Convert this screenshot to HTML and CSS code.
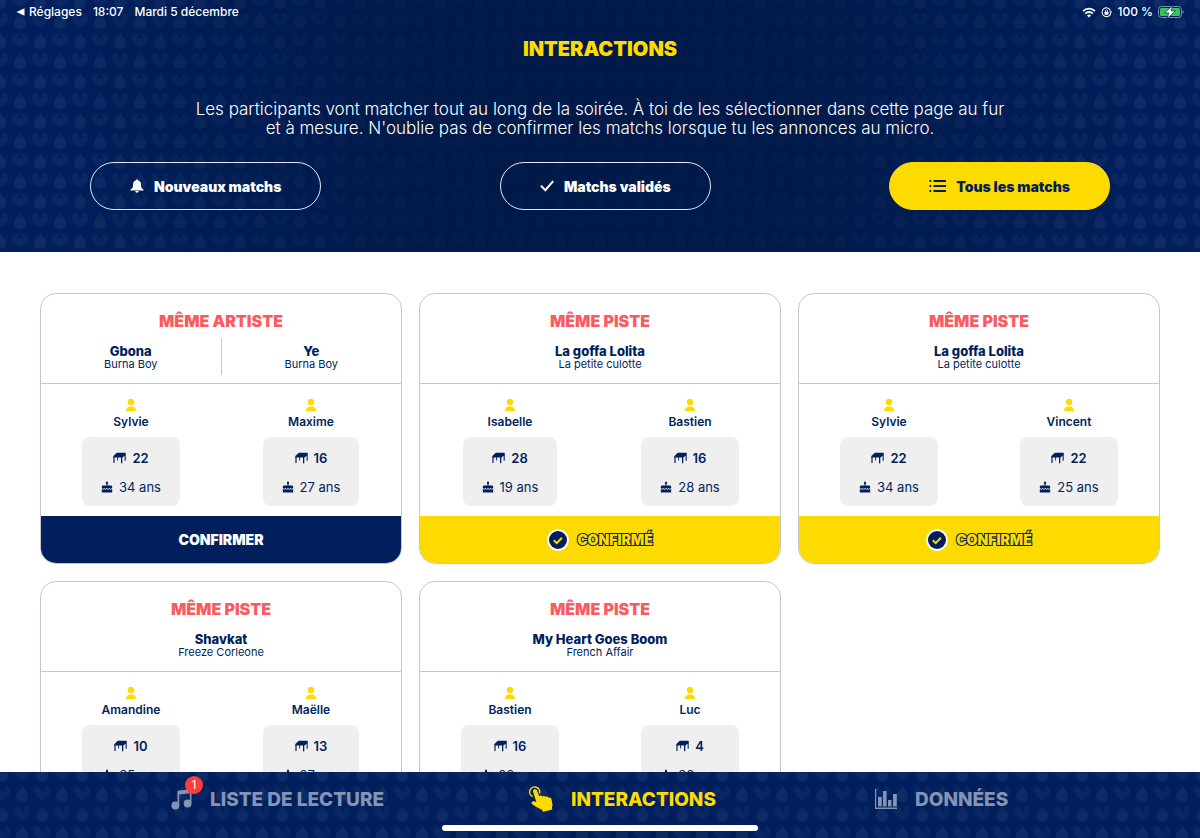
FILE: index.html
```html
<!DOCTYPE html>
<html lang="fr">
<head>
<meta charset="utf-8">
<meta name="viewport" content="width=device-width, initial-scale=1">
<title>Interactions</title>
<link rel="stylesheet" href="styles.css">
</head>
<body>
<svg class="sprite" aria-hidden="true">
  <symbol id="person" viewBox="0 0 12 14"><circle cx="6" cy="4" r="3.2"/><path d="M.8 13.200C.8 10 3 8.400 6 8.400s5.200 1.600 5.200 4.800z"/></symbol>
  <symbol id="desk" viewBox="0 0 13 12"><path d="M3.800.8H12.700V3L9.300 5.600H.4V4z"/><path d="M.4 4.500h1.200V11H.4zM4.200 5h.9v3.500h-.9zM8 5h1.300v6.200H8zM11.600 2.500h1.100v6.300h-1.100z"/></symbol>
  <symbol id="cake" viewBox="0 0 12 12"><path d="M6 0l1.200 1.900a1.200 1.200 0 0 1-.7 1.300V4.500H9.800c.8 0 1.400.6 1.400 1.400v1.200l-1.300.8-1.300-.9-1.300.9L6 7l-1.300.9L3.400 7l-1.300.9L.8 7.100V5.900c0-.8.600-1.400 1.400-1.400h3.300V3.200a1.200 1.200 0 0 1-.7-1.300z"/><path d="M.8 8l1.300.8 1.300-.9 1.300.9L6 7.900l1.300.9 1.300-.9 1.300.9 1.300-.8v3.500H.8z"/></symbol>
  <symbol id="done" viewBox="0 0 22 22"><circle cx="11" cy="11" r="10.800" fill="#fff"/><circle cx="11" cy="11" r="9" fill="#001f5c"/><path d="M6.800 11.300l2.900 2.800 5.200-5.400" fill="none" stroke="#fddb00" stroke-width="2"/></symbol>
</svg>
<div class="app">
  <header class="hero">
    <div class="status">
      <div class="status-left"><a class="back" href="#"><svg class="caret" viewBox="0 0 9 8" aria-hidden="true"><path d="M.5 4L8.500.300v7.400z" fill="#fff"/></svg>Réglages</a><span>18:07</span><span>Mardi 5 décembre</span></div>
      <div class="status-right">
        <svg class="wifi" viewBox="0 0 16 12" aria-hidden="true"><g fill="none" stroke="#fff" stroke-width="2.200"><path d="M1.200 4.400a9.600 9.600 0 0 1 13.600 0"/><path d="M3.700 7.300a6 6 0 0 1 8.600 0"/></g><path d="M5.700 9.400a3.200 3.200 0 0 1 4.600 0L8 11.800z" fill="#fff"/></svg>
        <svg class="lock" viewBox="0 0 12 12" aria-hidden="true"><path d="M10.400 3.800A4.800 4.800 0 1 0 10.800 6" fill="none" stroke="#fff" stroke-width="1.100"/><path d="M8.800 4.500h3L11 6.700z" fill="#fff"/><rect x="3.900" y="5.300" width="4.200" height="3.200" rx=".5" fill="#fff"/><path d="M4.800 5.500V4.300a1.200 1.200 0 0 1 2.400 0v1.200" fill="none" stroke="#fff" stroke-width=".8"/></svg>
        <span>100 %</span>
        <svg class="battery" viewBox="0 0 26 14" aria-hidden="true"><rect x=".5" y="1.500" width="23" height="11" rx="3" fill="none" stroke="#7f8fae" stroke-width="1"/><rect x="2" y="3" width="20" height="8" rx="1.500" fill="#34c759"/><path d="M24.600 5.200c1.600.6 1.600 3 0 3.600z" fill="#7f8fae"/><path d="M14.600.500L6.500 7.900h4.300L9.200 13.500l8.300-7.600h-4.400z" fill="#fff" stroke="#001c50" stroke-width=".7"/></svg>
      </div>
    </div>
    <h1 class="title">INTERACTIONS</h1>
    <p class="intro">Les participants vont matcher tout au long de la soirée. À toi de les sélectionner dans cette page au fur<br>et à mesure. N'oublie pas de confirmer les matchs lorsque tu les annonces au micro.</p>
    <div class="filters">
      <button class="filter filter-new" type="button"><svg class="bell" viewBox="0 0 14 14" aria-hidden="true"><path d="M7 .5c.7 0 1.200.5 1.200 1.100C10.100 2.200 11 3.700 11 5.500c0 3 .6 4 2.500 5v.9H.5v-.9C2.400 9.500 3 8.500 3 5.500c0-1.800.9-3.300 2.800-3.900C5.800 1 6.300.5 7 .5zM5.300 12h3.400a1.700 1.700 0 0 1-3.400 0z" fill="currentColor"/></svg>Nouveaux matchs</button>
      <button class="filter filter-ok" type="button"><svg class="tick" viewBox="0 0 14 12" aria-hidden="true"><path d="M.9 5.600l4.400 4.600L13.200 1.200" fill="none" stroke="currentColor" stroke-width="2"/></svg>Matchs validés</button>
      <button class="filter filter-all" type="button"><svg class="list" viewBox="0 0 17 14" aria-hidden="true"><path d="M4.500 2H17M4.500 7H17M4.500 12H17M.5 2h1.700M.5 7h1.700M.5 12h1.700" fill="none" stroke="currentColor" stroke-width="2"/></svg>Tous les matchs</button>
    </div>
  </header>

  <main class="content">
    <article class="card">
      <div class="card-head">
        <h2 class="kind">MÊME ARTISTE</h2>
        <div class="songs"><div class="song"><strong>Gbona</strong><span>Burna Boy</span></div><div class="song song-next"><strong>Ye</strong><span>Burna Boy</span></div></div>
      </div>
      <div class="people">
        <div class="person"><svg class="avatar"><use href="#person"/></svg><span class="name">Sylvie</span><div class="facts"><div class="table-no"><svg class="desk"><use href="#desk"/></svg>22</div><div class="age"><svg class="cake"><use href="#cake"/></svg>34 ans</div></div></div>
        <div class="person"><svg class="avatar"><use href="#person"/></svg><span class="name">Maxime</span><div class="facts"><div class="table-no"><svg class="desk"><use href="#desk"/></svg>16</div><div class="age"><svg class="cake"><use href="#cake"/></svg>27 ans</div></div></div>
      </div>
      <button class="action" type="button">CONFIRMER</button>
    </article>

    <article class="card">
      <div class="card-head">
        <h2 class="kind">MÊME PISTE</h2>
        <div class="songs"><div class="song"><strong>La goffa Lolita</strong><span>La petite culotte</span></div></div>
      </div>
      <div class="people">
        <div class="person"><svg class="avatar"><use href="#person"/></svg><span class="name">Isabelle</span><div class="facts"><div class="table-no"><svg class="desk"><use href="#desk"/></svg>28</div><div class="age"><svg class="cake"><use href="#cake"/></svg>19 ans</div></div></div>
        <div class="person"><svg class="avatar"><use href="#person"/></svg><span class="name">Bastien</span><div class="facts"><div class="table-no"><svg class="desk"><use href="#desk"/></svg>16</div><div class="age"><svg class="cake"><use href="#cake"/></svg>28 ans</div></div></div>
      </div>
      <button class="action confirmed" type="button"><svg class="done"><use href="#done"/></svg><span class="outlined">CONFIRMÉ</span></button>
    </article>

    <article class="card">
      <div class="card-head">
        <h2 class="kind">MÊME PISTE</h2>
        <div class="songs"><div class="song"><strong>La goffa Lolita</strong><span>La petite culotte</span></div></div>
      </div>
      <div class="people">
        <div class="person"><svg class="avatar"><use href="#person"/></svg><span class="name">Sylvie</span><div class="facts"><div class="table-no"><svg class="desk"><use href="#desk"/></svg>22</div><div class="age"><svg class="cake"><use href="#cake"/></svg>34 ans</div></div></div>
        <div class="person"><svg class="avatar"><use href="#person"/></svg><span class="name">Vincent</span><div class="facts"><div class="table-no"><svg class="desk"><use href="#desk"/></svg>22</div><div class="age"><svg class="cake"><use href="#cake"/></svg>25 ans</div></div></div>
      </div>
      <button class="action confirmed" type="button"><svg class="done"><use href="#done"/></svg><span class="outlined">CONFIRMÉ</span></button>
    </article>

    <article class="card">
      <div class="card-head">
        <h2 class="kind">MÊME PISTE</h2>
        <div class="songs"><div class="song"><strong>Shavkat</strong><span>Freeze Corleone</span></div></div>
      </div>
      <div class="people">
        <div class="person"><svg class="avatar"><use href="#person"/></svg><span class="name">Amandine</span><div class="facts"><div class="table-no"><svg class="desk"><use href="#desk"/></svg>10</div><div class="age"><svg class="cake"><use href="#cake"/></svg>35 ans</div></div></div>
        <div class="person"><svg class="avatar"><use href="#person"/></svg><span class="name">Maëlle</span><div class="facts"><div class="table-no"><svg class="desk"><use href="#desk"/></svg>13</div><div class="age"><svg class="cake"><use href="#cake"/></svg>27 ans</div></div></div>
      </div>
    </article>

    <article class="card">
      <div class="card-head">
        <h2 class="kind">MÊME PISTE</h2>
        <div class="songs"><div class="song"><strong>My Heart Goes Boom</strong><span>French Affair</span></div></div>
      </div>
      <div class="people">
        <div class="person"><svg class="avatar"><use href="#person"/></svg><span class="name">Bastien</span><div class="facts"><div class="table-no"><svg class="desk"><use href="#desk"/></svg>16</div><div class="age"><svg class="cake"><use href="#cake"/></svg>28 ans</div></div></div>
        <div class="person"><svg class="avatar"><use href="#person"/></svg><span class="name">Luc</span><div class="facts"><div class="table-no"><svg class="desk"><use href="#desk"/></svg>4</div><div class="age"><svg class="cake"><use href="#cake"/></svg>30 ans</div></div></div>
      </div>
    </article>
  </main>

  <nav class="tabs">
    <a class="tab tab-list" href="#"><span class="note-wrap"><svg class="note" viewBox="0 0 22 22" aria-hidden="true"><path d="M6.500 2.800L20.500 1V15.300h-1.700V5.200L8.200 6.500V17.500H6.500z" fill="currentColor"/><circle cx="4.400" cy="17.500" r="3.900" fill="currentColor"/><circle cx="16.600" cy="15.500" r="3.900" fill="currentColor"/></svg><span class="badge">1</span></span>LISTE DE LECTURE</a>
    <a class="tab tab-touch active" href="#"><svg class="touch" viewBox="0 0 24 26" aria-hidden="true"><path d="M3.600 10.500A5 5 0 1 1 10.500 7.400" fill="none" stroke="currentColor" stroke-width="1.500"/><path d="M4.200 6.200c-.6-1.600.2-2.700 1.400-3 1.200-.2 2.100.4 2.600 1.700l2.100 5.300c.9-.9 2.400-.8 3.100.3.900-.9 2.500-.7 3.100.4 1-.8 2.500-.4 3 .8 1.500-.7 2.700.1 3 1.500l.9 4.800c.3 1.700-.2 2.500-.4 3.600l.3 1.800-9.300 2.300-1-2C9.500 22.300 6 20.500 3.200 18.300c-1.200-1-.6-3 1.200-3 1 0 2.100.5 3 .9z" fill="currentColor"/></svg>INTERACTIONS</a>
    <a class="tab tab-data" href="#"><svg class="chart" viewBox="0 0 22 20" aria-hidden="true"><path d="M0 0h1.200v18.500H22V20H0zM3 8h3.800v9.500H3zM8 2h3.600v15.500H8zM13 11h3.500v6.500H13zM18 5h3.800v12.500H18z" fill="currentColor"/></svg>DONNÉES</a>
    <span class="home-bar"></span>
  </nav>
</div>
</body>
</html>
```

FILE: styles.css
```css
:root {
  --navy: #001f5c;
  --yellow: #fddb00;
  --pattern: url("data:image/svg+xml,%3Csvg xmlns='http://www.w3.org/2000/svg' width='40' height='40'%3E%3Cdefs%3E%3Cpath id='f' fill='%23fff' fill-opacity='.055' d='M0-8c1 4 6 6 6 11a6 6 0 0 1-12 0c0-3 2-4 3-7 1 1 1 2 1 2 1-2 2-3 2-6z'/%3E%3Cpath id='h' fill='%23fff' fill-opacity='.035' d='M-2-6l1 4 2 0 0 2 2-2-1-4c4-2 6 1 6 4 0 4-4 7-8 9-4-2-8-5-8-9 0-4 3-6 6-4z'/%3E%3C/defs%3E%3Cuse href='%23f' x='20' y='20'/%3E%3Cuse href='%23f'/%3E%3Cuse href='%23f' x='40'/%3E%3Cuse href='%23f' y='40'/%3E%3Cuse href='%23f' x='40' y='40'/%3E%3Cuse href='%23h' x='20'/%3E%3Cuse href='%23h' x='20' y='40'/%3E%3Cuse href='%23h' y='20'/%3E%3Cuse href='%23h' x='40' y='20'/%3E%3C/svg%3E");
}

* { box-sizing: border-box; }

body {
  margin: 0;
  color: var(--navy);
  background: #fff;
  font-family: Inter, "Liberation Sans", sans-serif;
}

h1, h2, p { margin: 0; }
button { font: inherit; color: inherit; cursor: pointer; }
a { color: inherit; text-decoration: none; }
svg { flex: none; }
.sprite { display: none; }

.app {
  display: flex;
  flex-direction: column;
  height: 100vh;
}

.hero {
  flex: none;
  padding-bottom: 42px;
  color: #fff;
  text-align: center;
  background: radial-gradient(circle at 50% 50%, rgba(0, 23, 66, 0.8) 0, rgba(0, 23, 66, 0.7) 200px, rgba(0, 31, 92, 0) 540px), var(--pattern) 0 0, var(--navy);
}

.status {
  display: flex;
  justify-content: space-between;
  height: 24px;
  padding: 0 16px;
  font-size: 12px;
  line-height: 24px;
  font-weight: 500;
}
.status-left { display: flex; gap: 11px; }
.back { display: flex; align-items: center; gap: 4px; }
.caret { width: 9px; height: 8px; }
.status-right { display: flex; align-items: center; gap: 5px; }
.wifi { width: 14px; height: 11px; }
.lock { width: 11px; height: 11px; }
.battery { width: 26px; height: 14px; }

.title {
  padding-top: 13px;
  color: var(--yellow);
  font-size: 20px;
  line-height: 24px;
  font-weight: 900;
}

.intro {
  padding: 39px 40px 0;
  font-size: 17px;
  line-height: 19px;
  font-weight: 300;
}

.filters {
  display: flex;
  justify-content: space-between;
  padding: 24px 90px 0;
}
.filter {
  display: flex;
  align-items: center;
  justify-content: center;
  gap: 10px;
  height: 48px;
  padding: 0 39px;
  border: 1px solid #e4e8f0;
  border-radius: 24px;
  background: transparent;
  font-size: 14px;
  font-weight: 900;
}
.filter-all { border-color: var(--yellow); background: var(--yellow); color: var(--navy); }
.bell { width: 14px; height: 14px; }
.tick { width: 14px; height: 12px; }
.list { width: 17px; height: 14px; }

.content {
  flex: 1;
  min-height: 0;
  overflow: hidden;
  display: grid;
  grid-template-columns: repeat(3, 1fr);
  grid-auto-rows: max-content;
  align-content: start;
  gap: 17px;
  padding: 41px 40px 0;
}

.card {
  overflow: hidden;
  border: 1px solid #c6c7cc;
  border-radius: 16px;
  background: #fff;
  text-align: center;
}
.card-head {
  height: 90px;
  padding-top: 17px;
  border-bottom: 1px solid #c6c7cc;
}
.kind {
  color: #fc5a5f;
  font-size: 16px;
  line-height: 20px;
  font-weight: 900;
}
.songs { display: flex; padding-top: 7px; }
.song {
  flex: 1;
  display: flex;
  flex-direction: column;
  height: 37px;
  padding-top: 7px;
  font-size: 11px;
  line-height: 13px;
}
.song strong { font-size: 13px; font-weight: 800; }
.song-next { border-left: 1px solid #c6c7cc; }

.people { display: flex; height: 132px; padding-top: 14px; }
.person {
  flex: 1;
  display: flex;
  flex-direction: column;
  align-items: center;
}
.avatar { width: 12px; height: 14px; fill: var(--yellow); }
.name {
  padding: 2px 0 7px;
  font-size: 12px;
  line-height: 16px;
  font-weight: 600;
}
.facts {
  display: flex;
  flex-direction: column;
  gap: 13px;
  padding: 13px 19px 11px;
  border-radius: 8px;
  background: #efefef;
  fill: var(--navy);
}
.table-no, .age {
  display: flex;
  align-items: center;
  justify-content: center;
  gap: 6px;
  font-size: 13px;
  line-height: 16px;
}
.table-no { font-weight: 600; }
.desk { width: 13px; height: 12px; }
.cake { width: 12px; height: 12px; }

.action {
  display: flex;
  align-items: center;
  justify-content: center;
  gap: 8px;
  width: 100%;
  height: 47px;
  padding: 0;
  border: 0;
  background: var(--navy);
  color: #fff;
  font-size: 14px;
  font-weight: 900;
}
.confirmed { background: var(--yellow); color: var(--yellow); }
.done { width: 22px; height: 22px; }
.outlined {
  -webkit-text-stroke: 2px var(--navy);
  paint-order: stroke fill;
}

.tabs {
  position: relative;
  flex: none;
  display: grid;
  grid-template-columns: 358fr 346fr 325fr;
  height: 66px;
  padding-left: 14.25%;
  color: #8594b5;
  background: var(--pattern) 2px 1px, var(--navy);
}
.tab {
  display: flex;
  align-items: center;
  height: 54px;
  font-size: 19px;
  font-weight: 800;
  white-space: nowrap;
}
.active { color: var(--yellow); }
.tab-list { gap: 17px; }
.tab-touch { gap: 18px; }
.tab-data { gap: 18px; }
.note-wrap { position: relative; display: flex; }
.note { width: 22px; height: 22px; }
.touch { width: 24px; height: 26px; }
.chart { width: 22px; height: 20px; }
.badge {
  position: absolute;
  top: -12px;
  right: -10px;
  width: 18px;
  height: 18px;
  border-radius: 50%;
  background: #fc3d39;
  color: #fff;
  font-size: 12px;
  line-height: 18px;
  font-weight: 400;
  text-align: center;
}
.home-bar {
  position: absolute;
  bottom: 7px;
  left: 50%;
  width: 316px;
  height: 6px;
  margin-left: -158px;
  border-radius: 3px;
  background: #fff;
}
```
